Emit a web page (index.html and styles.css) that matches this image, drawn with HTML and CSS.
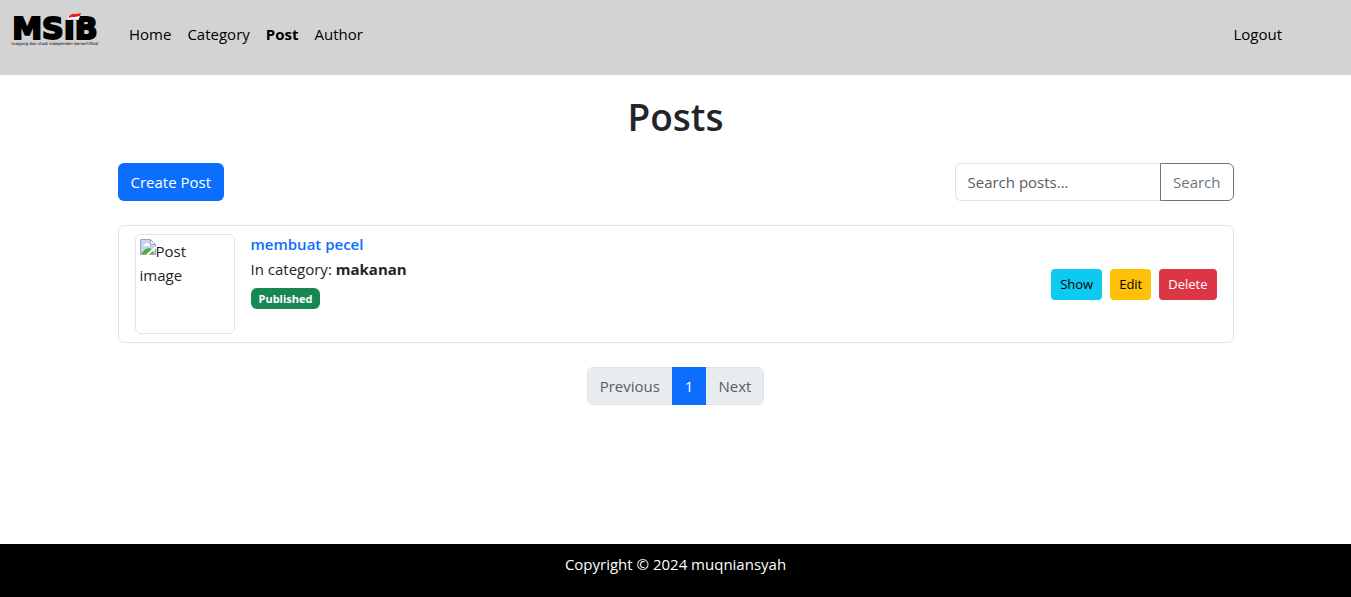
FILE: index.html
```html
<!DOCTYPE html>
<html lang="en">
<head>
  <meta charset="utf-8">
  <meta name="viewport" content="width=device-width, initial-scale=1">
  <title>Posts</title>
  <link rel="stylesheet" href="styles.css">
</head>
<body>
  <header class="navbar">
    <a class="brand" href="#" aria-label="MSIB">
      <svg class="brand-logo" width="96" height="36" viewBox="0 0 96 36">
        <text class="brand-name" x="47" y="28" text-anchor="middle">MSIB</text>
        <path fill="#d3d3d3" d="M57 0h14v9H57z"/>
        <path fill="#f01818" d="M61 5q4-3 6-2 3 0 6-1l-1 3q-3 1-6 1-2 0-5 1z"/>
        <path fill="#fff" d="M60 7q3-1 6-1 3 0 6-1l-1 3q-3 0-5 0-2 0-6 1z"/>
        <text class="brand-tagline" x="47" y="34" text-anchor="middle">magang dan studi independen bersertifikat</text>
      </svg>
    </a>
    <nav class="menu">
      <a class="menu-link" href="#">Home</a>
      <a class="menu-link" href="#">Category</a>
      <a class="menu-link active" href="#" aria-current="page">Post</a>
      <a class="menu-link" href="#">Author</a>
    </nav>
    <a class="menu-link logout" href="#">Logout</a>
  </header>

  <main class="container">
    <h1 class="title">Posts</h1>
    <div class="toolbar">
      <a class="btn btn-primary" href="#">Create Post</a>
      <form class="search">
        <input class="search-input" type="text" placeholder="Search posts..." aria-label="Search posts">
        <button class="btn search-btn" type="button">Search</button>
      </form>
    </div>

    <ul class="posts">
      <li class="post">
        <div class="thumb">
          <svg class="broken" width="16" height="16" viewBox="0 0 16 16" aria-hidden="true">
            <path fill="#c3d5f5" d="M1 1h9l5 5v9H1z"/>
            <path fill="#fff" d="M3 7q0-2 2-2 1-2 3-1 2 0 2 3z"/>
            <path fill="#4caf3c" d="M1 15q4-6 8-6 3 0 5 6z"/>
            <path fill="none" stroke="#a0a4a8" d="M.5 15.500V.5h10l5 5v10z"/>
            <path fill="#fff" stroke="#a0a4a8" d="M10.500.5v5h5z"/>
            <path stroke="#fff" stroke-width="2" d="M7 16l9-8"/>
          </svg>Post image
        </div>
        <div class="info">
          <a class="post-title" href="#">membuat pecel</a>
          <p class="category">In category: <strong>makanan</strong></p>
          <span class="badge">Published</span>
        </div>
        <div class="actions">
          <a class="btn btn-sm btn-info" href="#">Show</a>
          <a class="btn btn-sm btn-warning" href="#">Edit</a>
          <button class="btn btn-sm btn-danger" type="button">Delete</button>
        </div>
      </li>
    </ul>

    <nav class="pagination" aria-label="Pages">
      <a class="page" href="#">Previous</a>
      <a class="page current" href="#" aria-current="page">1</a>
      <a class="page" href="#">Next</a>
    </nav>
  </main>

  <footer class="footer">Copyright © 2024 muqniansyah</footer>
</body>
</html>
```

FILE: styles.css
```css
* {
  box-sizing: border-box;
}

body {
  margin: 0;
  min-height: 100vh;
  display: flex;
  flex-direction: column;
  font-family: "Open Sans", "Noto Sans", sans-serif;
  font-size: 15px;
  line-height: 24px;
  color: #212529;
  background: #fff;
}

a {
  text-decoration: none;
}

.navbar {
  display: flex;
  align-items: flex-start;
  padding: 11px 61px 28px 8px;
  background: #d3d3d3;
}

.brand {
  display: flex;
  margin-right: 17px;
}

.brand-name {
  font: bold 30px "DejaVu Sans", sans-serif;
  stroke: #000;
  stroke-width: 2px;
}

.brand-tagline {
  font: 4px "DejaVu Sans", sans-serif;
}

.menu {
  display: flex;
}

.menu-link {
  padding: 11px 8px 0;
  color: #000;
}

.active {
  font-weight: 700;
}

.logout {
  margin-left: auto;
}

.container {
  width: 100%;
  max-width: 1140px;
  margin: 0 auto;
  padding: 18px 12px 0;
}

.title {
  margin: 0 0 22px;
  font-size: 37px;
  line-height: 48px;
  font-weight: 600;
  text-align: center;
}

.toolbar {
  display: flex;
  justify-content: space-between;
  margin-bottom: 24px;
}

.btn {
  padding: 6px 12px;
  border: 1px solid transparent;
  border-radius: 6px;
  font: inherit;
  text-align: center;
}

.btn-primary {
  color: #fff;
  background: #0d6efd;
}

.search {
  display: flex;
  width: 279px;
}

.search-input {
  flex: 1;
  min-width: 0;
  padding: 6px 12px;
  border: 1px solid #dee2e6;
  border-right: 0;
  border-radius: 6px 0 0 6px;
  font: inherit;
}

.search-input::placeholder {
  color: #595c5f;
}

.search-btn {
  color: #6c757d;
  background: #fff;
  border-color: #6c757d;
  border-radius: 0 6px 6px 0;
}

.posts {
  margin: 0 0 24px;
  padding: 0;
  list-style: none;
}

.post {
  display: flex;
  gap: 16px;
  padding: 8px 16px;
  border: 1px solid #dee2e6;
  border-radius: 6px;
}

.thumb {
  width: 100px;
  height: 100px;
  padding: 4px;
  border: 1px solid #dee2e6;
  border-radius: 6px;
}

.broken {
  vertical-align: text-bottom;
  margin-bottom: 6px;
}

.info {
  flex: 1;
}

.post-title {
  display: block;
  line-height: 20px;
  margin-bottom: 3px;
  font-weight: 600;
  color: #0d6efd;
}

.category {
  margin: 0 0 7px;
}

.badge {
  display: block;
  width: fit-content;
  padding: 4px 8px;
  border-radius: 6px;
  font-size: 11px;
  line-height: 13px;
  font-weight: 700;
  color: #fff;
  background: #198754;
}

.actions {
  display: flex;
  align-items: center;
  gap: 8px;
}

.btn-sm {
  padding: 4px 8px;
  border-radius: 4px;
  font-size: 13px;
  line-height: 21px;
}

.btn-info {
  color: #000;
  background: #0dcaf0;
}

.btn-warning {
  color: #000;
  background: #ffc107;
}

.btn-danger {
  color: #fff;
  background: #dc3545;
}

.pagination {
  display: flex;
  width: fit-content;
  margin: 0 auto;
  border: 1px solid #dee2e6;
  border-radius: 6px;
}

.page {
  padding: 6px 12px;
  color: #595c5f;
  background: #e9ecef;
}

.page:first-child {
  border-radius: 5px 0 0 5px;
}

.page:last-child {
  border-radius: 0 5px 5px 0;
}

.current {
  margin: -1px 0;
  padding: 7px 13px;
  color: #fff;
  background: #0d6efd;
}

.footer {
  margin-top: auto;
  padding: 8px 12px 21px;
  text-align: center;
  color: #fff;
  background: #000;
}
```
